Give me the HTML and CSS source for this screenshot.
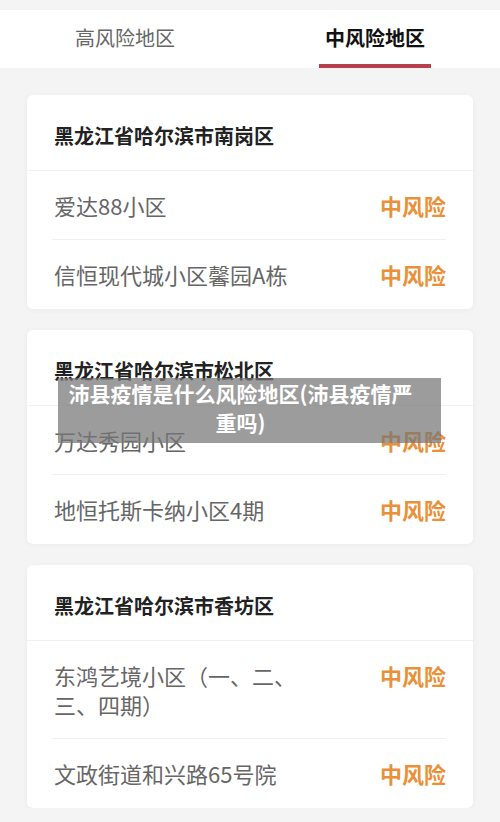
FILE: index.html
```html
<!DOCTYPE html>
<html lang="zh-CN">

<head>
    <meta charset="UTF-8">
    <meta name="viewport" content="width=device-width, initial-scale=1.0">
    <title>沛县疫情是什么风险地区</title>
    <link rel="stylesheet" href="styles.css">
</head>

<body>
    <div class="tabs">
        <div class="tab">高风险地区</div>
        <div class="tab active">中风险地区</div>
    </div>

    <div class="list">
        <div class="card">
            <div class="card-title">黑龙江省哈尔滨市南岗区</div>
            <div class="row">
                <span class="name">爱达88小区</span>
                <span class="level">中风险</span>
            </div>
            <div class="row">
                <span class="name">信恒现代城小区馨园A栋</span>
                <span class="level">中风险</span>
            </div>
        </div>

        <div class="card">
            <div class="card-title">黑龙江省哈尔滨市松北区</div>
            <div class="row">
                <span class="name">万达秀园小区</span>
                <span class="level">中风险</span>
            </div>
            <div class="row">
                <span class="name">地恒托斯卡纳小区4期</span>
                <span class="level">中风险</span>
            </div>
        </div>

        <div class="card">
            <div class="card-title">黑龙江省哈尔滨市香坊区</div>
            <div class="row">
                <span class="name">东鸿艺境小区（一、二、三、四期）</span>
                <span class="level">中风险</span>
            </div>
            <div class="row">
                <span class="name">文政街道和兴路65号院</span>
                <span class="level">中风险</span>
            </div>
        </div>
    </div>

    <!-- title overlay on top of the screenshot -->
    <div class="caption">沛县疫情是什么风险地区(沛县疫情严重吗)</div>
</body>

</html>
```

FILE: styles.css
```css
body {
    margin: 0;
    background-color: #f4f4f4;
    font-family: "Noto Sans CJK SC", "Noto Sans", sans-serif;
    position: relative;
}

.tabs {
    margin-top: 10px;
    height: 58px;
    background-color: #fff;
    display: flex;
}

.tab {
    flex: 1;
    display: flex;
    justify-content: center;
    align-items: center;
    font-size: 20px;
    color: #666;
    padding-bottom: 4px;
    position: relative;
}

.tab.active {
    color: #111;
    font-weight: bold;
}

.tab.active::after {
    content: "";
    position: absolute;
    bottom: 0;
    left: 69px;
    width: 112px;
    height: 4px;
    background-color: #b6414b;
}

.list {
    padding: 27px 27px 0;
    display: flex;
    flex-direction: column;
    gap: 21px;
}

.card {
    background-color: #fff;
    border-radius: 6px;
    box-shadow: 0 1px 6px rgba(0, 0, 0, 0.04);
}

.card-title {
    padding: 27px 27px 20px;
    line-height: 28px;
    font-size: 20px;
    font-weight: bold;
    color: #222;
    border-bottom: 1px solid #f0f0f0;
}

.row {
    margin: 0 27px 0 25px;
    padding: 20px 0 19px;
    display: flex;
    justify-content: space-between;
    align-items: flex-start;
    font-size: 22px;
    line-height: 29px;
    border-bottom: 1px solid #f0f0f0;
}

.row:last-child {
    padding-bottom: 20px;
    border-bottom: none;
}

.name {
    color: #666;
    max-width: 250px;
    padding-left: 2px;
}

.level {
    color: #ea9037;
    font-weight: bold;
}

.caption {
    position: absolute;
    left: 58px;
    top: 378px;
    width: 383px;
    height: 65px;
    box-sizing: border-box;
    padding: 1px 24px 0 6px;
    background-color: rgba(118, 118, 118, 0.72);
    color: #fff;
    font-size: 21px;
    font-weight: bold;
    line-height: 29px;
    text-align: center;
}
```
